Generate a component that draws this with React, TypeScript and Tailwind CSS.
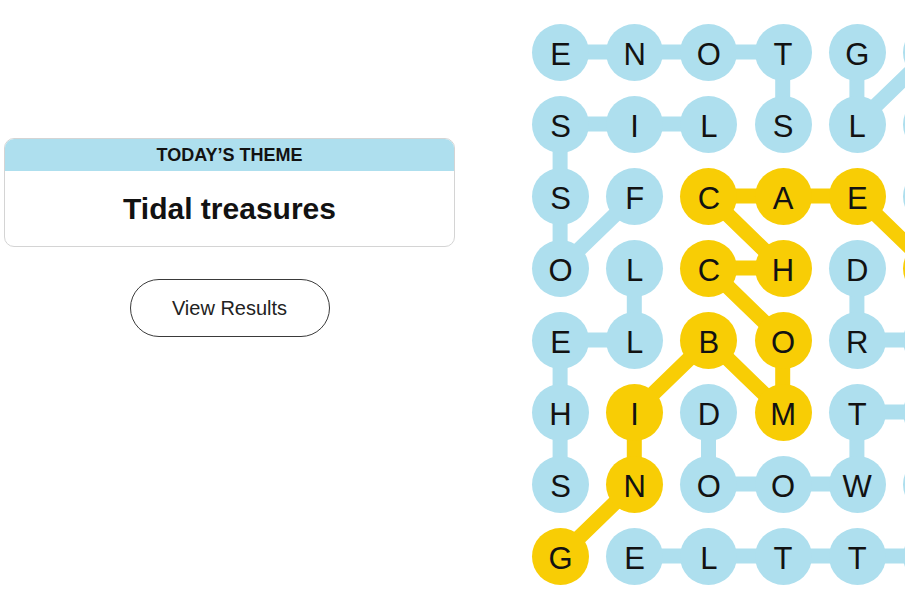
import React from "react";

type Cell = [number, number];

// column 5 sits past the window edge, only the circles' rims show
const LETTERS = [
  "ENOTG ",
  "SILSL ",
  "SFCAE ",
  "OLCHD ",
  "ELBOR ",
  "HIDMT ",
  "SNOOW ",
  "GELTT ",
];

const COL = 74.2;
const ROW = 72;

const BLUE = "#aedfee";
const YELLOW = "#f8cd05";

// each path is a found word, drawn as a chain of cells [col, row]
const words: { path: Cell[]; spangram?: boolean }[] = [
  { path: [[3, 1], [3, 0], [2, 0], [1, 0], [0, 0]] },
  { path: [[1, 2], [0, 3], [0, 2], [0, 1], [1, 1], [2, 1]] },
  { path: [[4, 0], [4, 1], [5, 0], [5, 1], [5, 2]] },
  { path: [[0, 6], [0, 5], [0, 4], [1, 4], [1, 3]] },
  {
    path: [[4, 3], [4, 4], [5, 4], [5, 5], [4, 5], [4, 6], [3, 6], [2, 6], [2, 5]],
  },
  { path: [[5, 6], [5, 7], [4, 7], [3, 7], [2, 7], [1, 7]] },
  {
    spangram: true,
    path: [[5, 3], [4, 2], [3, 2], [2, 2], [3, 3], [2, 3], [3, 4], [3, 5], [2, 4], [1, 5], [1, 6], [0, 7]],
  },
];

const spangramCells = new Set(
  words.filter((w) => w.spangram).flatMap((w) => w.path.map(([c, r]) => `${c}-${r}`))
);

function Board() {
  return (
    <div className="relative w-[445.2px] h-[576px] shrink-0">
      {/* connectors */}
      <svg className="absolute inset-0" width="445.2" height="576">
        {words.map((w, i) => (
          <polyline
            key={i}
            points={w.path.map(([c, r]) => `${COL / 2 + c * COL},${ROW / 2 + r * ROW}`).join(" ")}
            fill="none"
            stroke={w.spangram ? YELLOW : BLUE}
            strokeWidth={15}
            strokeLinejoin="round"
          />
        ))}
      </svg>

      {/* letters */}
      <div className="relative grid grid-cols-[repeat(6,74.2px)] grid-rows-[repeat(8,72px)]">
        {LETTERS.flatMap((row, r) =>
          row.split("").map((ch, c) => {
            const gold = spangramCells.has(`${c}-${r}`);
            return (
              <div key={`${c}-${r}`} className="flex items-center justify-center">
                <div
                  className={`w-[57px] h-[57px] pt-[4px] rounded-full flex items-center justify-center text-[31px] leading-none text-[#121212] ${
                    gold ? "bg-[#f8cd05]" : "bg-[#aedfee]"
                  }`}
                >
                  {ch.trim()}
                </div>
              </div>
            );
          })
        )}
      </div>
    </div>
  );
}

export default function App() {
  return (
    <div
      className="flex w-[905px] h-[613px] overflow-hidden bg-white text-[#121212]"
      style={{ fontFamily: '"Liberation Sans", Arial, sans-serif' }}
    >
      {/* Theme + results */}
      <div className="w-[523.4px] shrink-0 pl-1 pt-[138px]">
        <div className="w-[451px] flex flex-col items-center">
          <div className="w-full rounded-[10px] border border-[#d4d4d4] overflow-hidden">
            <div className="h-[32px] bg-[#aedfee] flex items-center justify-center text-[18px] font-bold">
              TODAY’S THEME
            </div>
            <div className="h-[75px] flex items-center justify-center text-[30px] font-bold">
              Tidal treasures
            </div>
          </div>

          <button className="mt-[32px] w-[200px] h-[58px] rounded-full border border-[#3a3a3a] text-[20px] text-[#222] flex items-center justify-center">
            View Results
          </button>
        </div>
      </div>

      {/* Board */}
      <div className="pt-4">
        <Board />
      </div>
    </div>
  );
}
